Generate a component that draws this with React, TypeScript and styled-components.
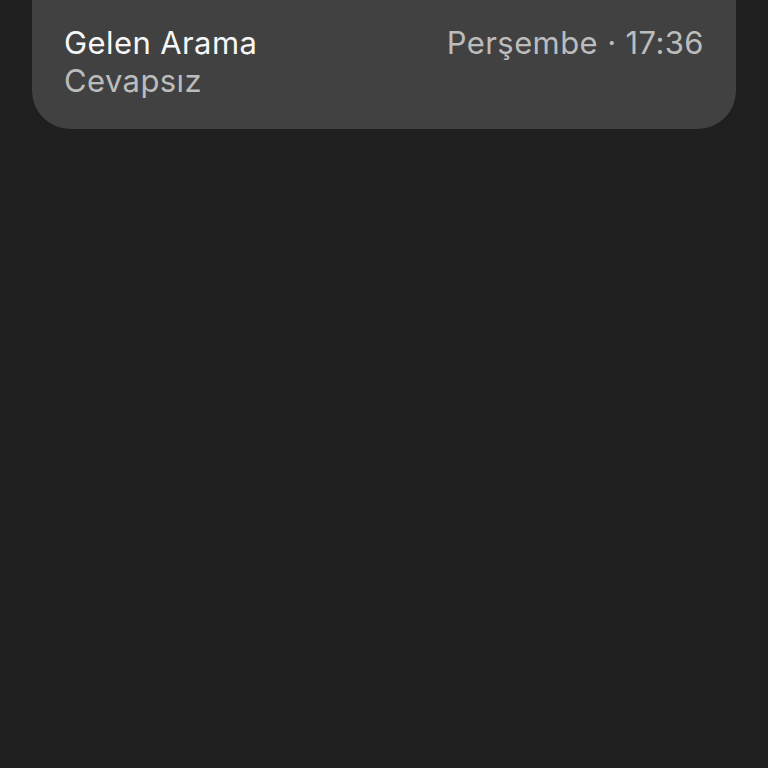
import React from "react";
import styled, { createGlobalStyle } from "styled-components";

const Global = createGlobalStyle`
  html, body {
    margin: 0;
    padding: 0;
    background: #1f1f1f;
  }
  body {
    font-family: Inter, "Noto Sans", "Liberation Sans", sans-serif;
    -webkit-font-smoothing: antialiased;
  }
`;

const Page = styled.div`
  min-height: 768px;
  background: #1f1f1f;
  display: flex;
  flex-direction: column;
`;

const Card = styled.div`
  margin: 0 32px;
  background: #414141;
  border-radius: 0 0 38px 38px;
  padding: 24px 32px 29px 32px;
  display: flex;
  flex-direction: column;
`;

const Row = styled.div`
  display: flex;
  justify-content: space-between;
  align-items: baseline;
  line-height: 38px;
`;

const Text = styled.span<{ $tone: "primary" | "secondary" }>`
  font-size: 31px;
  font-weight: 400;
  letter-spacing: 0.4px;
  color: ${(p) => (p.$tone === "primary" ? "#f7f7f7" : "#bcbcbc")};
  white-space: nowrap;
`;

export default function App() {
  return (
    <>
      <Global />
      <Page>
        <Card>
          <Row>
            <Text $tone="primary">Gelen Arama</Text>
            <Text $tone="secondary">Perşembe · 17:36</Text>
          </Row>
          <Row>
            <Text $tone="secondary">Cevapsız</Text>
          </Row>
        </Card>
      </Page>
    </>
  );
}
